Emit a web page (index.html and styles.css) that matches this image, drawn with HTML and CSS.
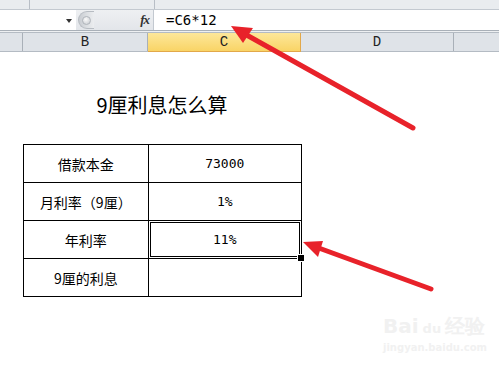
FILE: index.html
```html
<!DOCTYPE html>
<html lang="zh">
<head>
<meta charset="utf-8">
<title>9厘利息怎么算</title>
<link rel="stylesheet" href="styles.css">
</head>
<body>
<div class="page">
  <div class="topstrip">
    <div class="ts-a"></div>
    <div class="ts-b"></div>
    <div class="ts-c"></div>
  </div>
  <div class="formulabar">
    <div class="namebox"><span class="dd"></span></div>
    <div class="ctrls">
      <span class="knob"><span class="knob-in"></span></span>
      <span class="fx">fx</span>
    </div>
    <div class="input">=C6*12</div>
  </div>
  <div class="gap"></div>
  <div class="colheader">
    <div class="corner"></div>
    <div class="col colB">B</div>
    <div class="col colC">C</div>
    <div class="col colD">D</div>
    <div class="col colE"></div>
  </div>
  <div class="sheet">
    <div class="title">9厘利息怎么算</div>
    <table class="grid">
      <tr><td class="lbl">借款本金</td><td class="num">73000</td></tr>
      <tr><td class="lbl">月利率（9厘）</td><td class="num">1%</td></tr>
      <tr><td class="lbl">年利率</td><td class="num sel">11%</td></tr>
      <tr><td class="lbl">9厘的利息</td><td class="num"></td></tr>
    </table>
  </div>
  <div class="watermark">
    <div class="wm-top">Bai<span class="wm-du">du</span>经验</div>
    <div class="wm-url">jingyan.baidu.com</div>
  </div>
  <svg class="arrows" width="499" height="368" viewBox="0 0 499 368">
    <line x1="413" y1="128" x2="243" y2="33" stroke="#e8222a" stroke-width="5" stroke-linecap="round"/>
    <polygon points="231,26 253,28 243,43" fill="#e8222a"/>
    <line x1="431" y1="289" x2="316" y2="247" stroke="#e8222a" stroke-width="5" stroke-linecap="round"/>
    <polygon points="303,242 323,241 318,257" fill="#e8222a"/>
  </svg>
</div>
</body>
</html>
```
FILE: styles.css
```css
* { box-sizing: border-box; }
html, body { margin: 0; padding: 0; background: #fff; }
.page {
  position: relative;
  width: 499px;
  height: 368px;
  overflow: hidden;
  background: #fff;
  font-family: "Noto Sans CJK SC", "DejaVu Sans", sans-serif;
}
.topstrip {
  height: 10px;
  display: flex;
  background: #e9ecef;
  border-bottom: 1px solid #c3c9d0;
}
.ts-a { width: 30px; border-right: 1px solid #b8bec6; }
.ts-b { width: 125px; border-right: 1px solid #b8bec6; }
.ts-c { flex: 1; }
.formulabar {
  height: 21px;
  display: flex;
  background: #fff;
  border-bottom: 1px solid #a9b0b8;
}
.namebox {
  width: 76px;
  position: relative;
  background: #fff;
}
.dd {
  position: absolute;
  left: 66px;
  top: 9px;
  width: 0;
  height: 0;
  border-left: 3px solid transparent;
  border-right: 3px solid transparent;
  border-top: 4px solid #333;
}
.ctrls {
  width: 78px;
  display: flex;
  align-items: center;
  justify-content: space-between;
  padding: 0 4px 0 2px;
  background: linear-gradient(#eef0f2, #e3e6ea);
  border-right: 1px solid #c3c9d0;
}
.knob {
  width: 16px;
  height: 18px;
  border-radius: 9px 0 0 9px;
  background: linear-gradient(90deg, #c9cdd2, #eceef0);
  border: 1px solid #b7bcc2;
  border-right: none;
  display: flex;
  align-items: center;
  justify-content: center;
}
.knob-in {
  width: 9px;
  height: 9px;
  border-radius: 50%;
  background: radial-gradient(circle at 40% 35%, #fafafa, #c5c9ce);
  border: 1px solid #b0b5bb;
}
.fx {
  font-family: "Liberation Serif", serif;
  font-style: italic;
  font-weight: bold;
  font-size: 13px;
  color: #333;
  letter-spacing: -1px;
}
.input {
  flex: 1;
  padding-left: 12px;
  font-family: "DejaVu Sans Mono", monospace;
  font-size: 14px;
  line-height: 21px;
  color: #000;
}
.gap { height: 1px; background: #eef0f2; }
.colheader {
  height: 20px;
  display: flex;
  background: #dfe3e8;
  border-top: 1px solid #b4bbc3;
  border-bottom: 1px solid #b4bbc3;
  font-family: "Liberation Mono", monospace;
  font-size: 14px;
  color: #222;
}
.corner { width: 23px; border-right: 1px solid #a9b0b8; }
.col {
  display: flex;
  align-items: center;
  justify-content: center;
  border-right: 1px solid #a9b0b8;
}
.colB { width: 125px; }
.colC {
  width: 153px;
  background: linear-gradient(#fde79a, #f9d466);
  border-right: 1px solid #e2a84a;
  border-bottom: 1px solid #e2a84a;
  margin-bottom: -1px;
}
.colD { width: 153px; }
.colE { flex: 1; border-right: none; }
.sheet {
  padding-left: 23px;
}
.title {
  width: 278px;
  margin-top: 41px;
  height: 24px;
  line-height: 24px;
  text-align: center;
  font-size: 20px;
  color: #000;
}
.grid {
  margin-top: 27px;
  border-collapse: collapse;
  width: 279px;
}
.grid td {
  border: 1px solid #000;
  height: 38px;
  padding: 0;
  text-align: center;
  vertical-align: middle;
  font-size: 14px;
  color: #000;
}
.grid td.lbl { width: 125px; }
.grid td.num {
  width: 154px;
  font-family: "DejaVu Sans Mono", monospace;
  font-size: 13px;
}
.grid td.sel { position: relative; }
.grid td.sel::after {
  content: "";
  position: absolute;
  left: -1px;
  top: -1px;
  right: -1px;
  bottom: -1px;
  border: 3px double #000;
}
.grid td.sel::before {
  content: "";
  position: absolute;
  right: -4px;
  bottom: -4px;
  width: 6px;
  height: 6px;
  background: #000;
  border: 1px solid #fff;
  z-index: 2;
}
.watermark {
  position: absolute;
  left: 383px;
  top: 314px;
  color: #f1f1f1;
  font-family: "DejaVu Sans", sans-serif;
}
.wm-top {
  font-size: 20px;
  font-weight: bold;
  line-height: 24px;
}
.wm-du { font-size: 13px; margin: 0 4px; }
.wm-url { font-size: 10px; font-weight: bold; line-height: 14px; }
.arrows {
  position: absolute;
  left: 0;
  top: 0;
  pointer-events: none;
}
```
